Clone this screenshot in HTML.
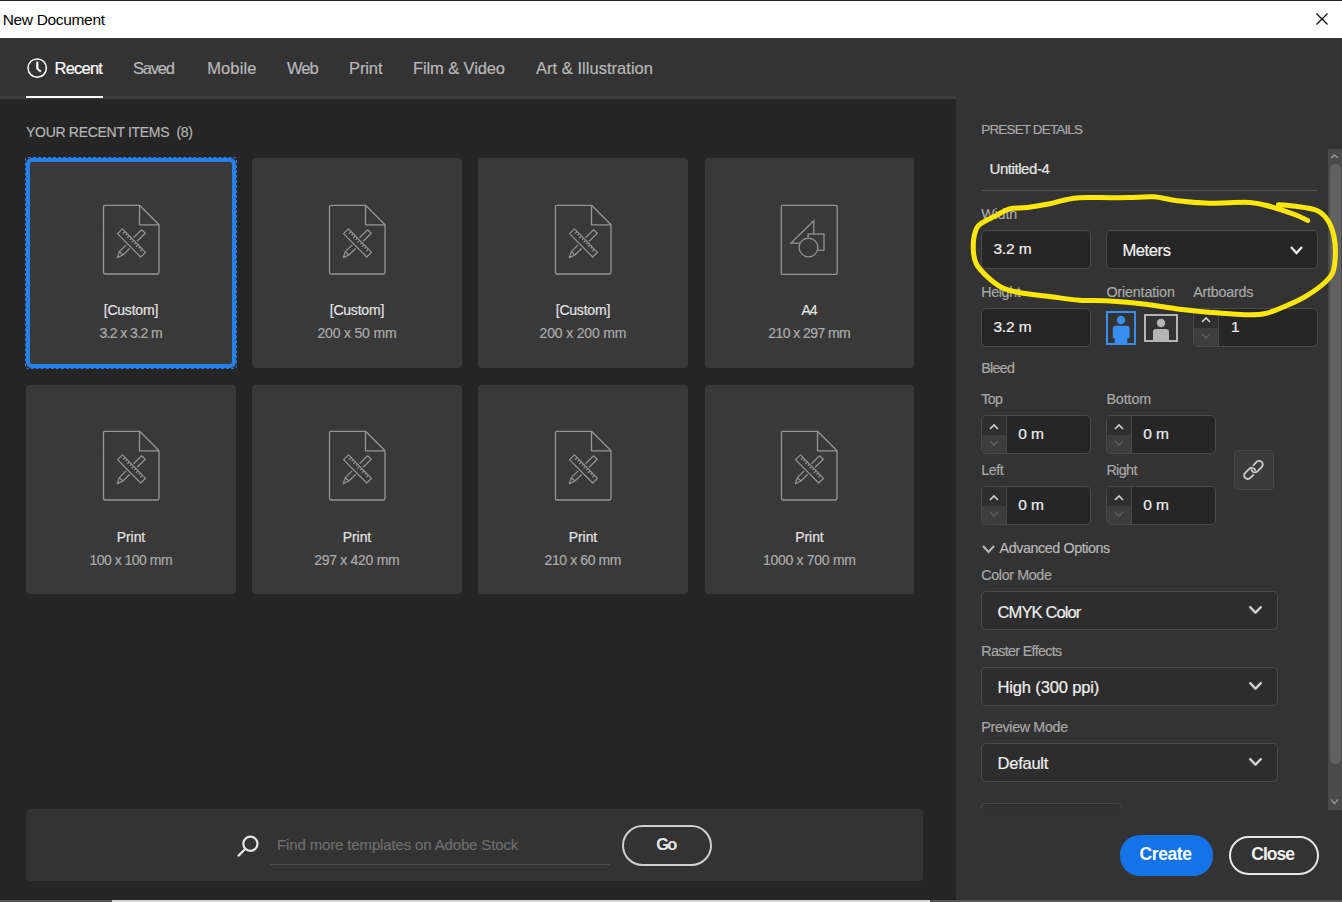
<!DOCTYPE html><html><head><meta charset="utf-8"><style>
html,body{margin:0;padding:0;}
body{width:1342px;height:902px;position:relative;overflow:hidden;background:#252525;font-family:"Liberation Sans",sans-serif;}
.t{position:absolute;line-height:1;white-space:nowrap;-webkit-text-stroke:0.2px currentColor;}
.r{position:absolute;box-sizing:border-box;}
svg{position:absolute;overflow:visible;}
</style></head><body>
<div class="r" style="left:0px;top:0px;width:1342px;height:1px;background:#1c1c1c;"></div>
<div class="r" style="left:0px;top:1px;width:1342px;height:37px;background:#ffffff;"></div>
<div class="t" style="left:2.70px;top:11.88px;font-size:15.5px;color:#000;letter-spacing:-0.331px;-webkit-text-stroke:0;">New Document</div>
<svg style="left:1316px;top:13px" width="12" height="12"><path d="M0.5 0.5L11.5 11.5M11.5 0.5L0.5 11.5" stroke="#000" stroke-width="1.1"/></svg>
<div class="r" style="left:0px;top:38px;width:1342px;height:58px;background:#333333;"></div>
<div class="r" style="left:0px;top:96px;width:1342px;height:3px;background:#3e3e3e;"></div>
<div class="r" style="left:26px;top:96px;width:77px;height:2px;background:#ffffff;"></div>
<svg style="left:27px;top:58px" width="20" height="20" viewBox="0 0 20 20"><circle cx="10.2" cy="10.1" r="9.2" fill="none" stroke="#fff" stroke-width="1.5"/><path d="M10.3 3.6V10.6L13.8 13.8" fill="none" stroke="#fff" stroke-width="2.2"/></svg>
<div class="t" style="left:54.60px;top:60.03px;font-size:16.5px;color:#ffffff;letter-spacing:-0.793px;">Recent</div>
<div class="t" style="left:133.00px;top:60.03px;font-size:16.5px;color:#b8b8b8;letter-spacing:-1.194px;">Saved</div>
<div class="t" style="left:207.20px;top:60.03px;font-size:16.5px;color:#b8b8b8;letter-spacing:0.121px;">Mobile</div>
<div class="t" style="left:287.00px;top:60.03px;font-size:16.5px;color:#b8b8b8;letter-spacing:-0.959px;">Web</div>
<div class="t" style="left:349.00px;top:60.03px;font-size:16.5px;color:#b8b8b8;letter-spacing:-0.102px;">Print</div>
<div class="t" style="left:413.00px;top:60.03px;font-size:16.5px;color:#b8b8b8;letter-spacing:-0.111px;">Film &amp; Video</div>
<div class="t" style="left:536.00px;top:60.03px;font-size:16.5px;color:#b8b8b8;letter-spacing:0.032px;">Art &amp; Illustration</div>
<div class="t" style="left:26.00px;top:125.15px;font-size:14px;color:#b4b4b4;letter-spacing:-0.296px;">YOUR RECENT ITEMS&nbsp;&nbsp;(8)</div>
<div class="r" style="left:26px;top:158px;width:210px;height:210px;background:#393939;border-radius:4px;"></div>
<svg style="left:101.5px;top:203.5px" width="58" height="72" viewBox="0 0 58 72"><path d="M1.5 3Q1.5 1.3 3.2 1.3H37.5L57 20.8V68.3Q57 70 55.3 70H3.2Q1.5 70 1.5 68.3Z" fill="none" stroke="#959595" stroke-width="1.3" stroke-linejoin="round"/><path d="M37.5 1.3V20.8H57" fill="none" stroke="#959595" stroke-width="1.3" stroke-linejoin="round"/><g fill="none" stroke="#959595" stroke-width="1.2" stroke-linejoin="round">
<path d="M39.6 25.8L43.3 29.2L20.9 51L15.3 53.6L17.3 47.6Z M17.3 47.6L20.9 51"/>
<path d="M15.5 29.6L20.5 24.9L43.5 48.3L38.7 53Z" fill="#393939" stroke="#393939" stroke-width="3.6"/>
<path d="M15.5 29.6L20.5 24.9L43.5 48.3L38.7 53Z" fill="#393939"/>
<path d="M23.02 27.47l-2.14 2.10M25.20 29.68l-1.64 1.61M27.37 31.89l-2.14 2.10M29.54 34.10l-1.64 1.61M31.72 36.31l-2.14 2.10M33.89 38.52l-1.64 1.61M36.06 40.73l-2.14 2.10M38.23 42.94l-1.64 1.61M40.41 45.15l-2.14 2.10"/>
</g></svg>
<div class="t" style="left:103.70px;top:303.15px;font-size:14px;color:#e2e2e2;letter-spacing:-0.200px;">[Custom]</div>
<div class="t" style="left:99.40px;top:325.65px;font-size:14px;color:#aaaaaa;letter-spacing:-0.606px;">3.2 x 3.2 m</div>
<div class="r" style="left:252px;top:158px;width:210px;height:210px;background:#393939;border-radius:4px;"></div>
<svg style="left:327.5px;top:203.5px" width="58" height="72" viewBox="0 0 58 72"><path d="M1.5 3Q1.5 1.3 3.2 1.3H37.5L57 20.8V68.3Q57 70 55.3 70H3.2Q1.5 70 1.5 68.3Z" fill="none" stroke="#959595" stroke-width="1.3" stroke-linejoin="round"/><path d="M37.5 1.3V20.8H57" fill="none" stroke="#959595" stroke-width="1.3" stroke-linejoin="round"/><g fill="none" stroke="#959595" stroke-width="1.2" stroke-linejoin="round">
<path d="M39.6 25.8L43.3 29.2L20.9 51L15.3 53.6L17.3 47.6Z M17.3 47.6L20.9 51"/>
<path d="M15.5 29.6L20.5 24.9L43.5 48.3L38.7 53Z" fill="#393939" stroke="#393939" stroke-width="3.6"/>
<path d="M15.5 29.6L20.5 24.9L43.5 48.3L38.7 53Z" fill="#393939"/>
<path d="M23.02 27.47l-2.14 2.10M25.20 29.68l-1.64 1.61M27.37 31.89l-2.14 2.10M29.54 34.10l-1.64 1.61M31.72 36.31l-2.14 2.10M33.89 38.52l-1.64 1.61M36.06 40.73l-2.14 2.10M38.23 42.94l-1.64 1.61M40.41 45.15l-2.14 2.10"/>
</g></svg>
<div class="t" style="left:329.70px;top:303.15px;font-size:14px;color:#e2e2e2;letter-spacing:-0.200px;">[Custom]</div>
<div class="t" style="left:317.45px;top:325.65px;font-size:14px;color:#aaaaaa;letter-spacing:-0.182px;">200 x 50 mm</div>
<div class="r" style="left:478px;top:158px;width:210px;height:210px;background:#393939;border-radius:4px;"></div>
<svg style="left:553.5px;top:203.5px" width="58" height="72" viewBox="0 0 58 72"><path d="M1.5 3Q1.5 1.3 3.2 1.3H37.5L57 20.8V68.3Q57 70 55.3 70H3.2Q1.5 70 1.5 68.3Z" fill="none" stroke="#959595" stroke-width="1.3" stroke-linejoin="round"/><path d="M37.5 1.3V20.8H57" fill="none" stroke="#959595" stroke-width="1.3" stroke-linejoin="round"/><g fill="none" stroke="#959595" stroke-width="1.2" stroke-linejoin="round">
<path d="M39.6 25.8L43.3 29.2L20.9 51L15.3 53.6L17.3 47.6Z M17.3 47.6L20.9 51"/>
<path d="M15.5 29.6L20.5 24.9L43.5 48.3L38.7 53Z" fill="#393939" stroke="#393939" stroke-width="3.6"/>
<path d="M15.5 29.6L20.5 24.9L43.5 48.3L38.7 53Z" fill="#393939"/>
<path d="M23.02 27.47l-2.14 2.10M25.20 29.68l-1.64 1.61M27.37 31.89l-2.14 2.10M29.54 34.10l-1.64 1.61M31.72 36.31l-2.14 2.10M33.89 38.52l-1.64 1.61M36.06 40.73l-2.14 2.10M38.23 42.94l-1.64 1.61M40.41 45.15l-2.14 2.10"/>
</g></svg>
<div class="t" style="left:555.70px;top:303.15px;font-size:14px;color:#e2e2e2;letter-spacing:-0.200px;">[Custom]</div>
<div class="t" style="left:539.55px;top:325.65px;font-size:14px;color:#aaaaaa;letter-spacing:-0.166px;">200 x 200 mm</div>
<div class="r" style="left:705px;top:158px;width:209px;height:210px;background:#393939;border-radius:4px;"></div>
<svg style="left:780.0px;top:203.5px" width="58" height="72" viewBox="0 0 58 72"><rect x="1.3" y="1.3" width="55.9" height="69.1" rx="1.5" fill="none" stroke="#959595" stroke-width="1.3"/>
<g stroke="#959595" stroke-width="1.25">
<path d="M10.9 39H33.8V16.8Z" fill="none" stroke-linejoin="miter"/>
<rect x="28.1" y="30" width="15.9" height="16.3" fill="#393939"/>
<circle cx="28.5" cy="43.5" r="9.4" fill="#393939"/>
</g></svg>
<div class="t" style="left:801.45px;top:303.15px;font-size:14px;color:#e2e2e2;letter-spacing:-1.015px;">A4</div>
<div class="t" style="left:768.20px;top:325.65px;font-size:14px;color:#aaaaaa;letter-spacing:-0.557px;">210 x 297 mm</div>
<div class="r" style="left:26px;top:385px;width:210px;height:209px;background:#393939;border-radius:4px;"></div>
<svg style="left:101.5px;top:429.5px" width="58" height="72" viewBox="0 0 58 72"><path d="M1.5 3Q1.5 1.3 3.2 1.3H37.5L57 20.8V68.3Q57 70 55.3 70H3.2Q1.5 70 1.5 68.3Z" fill="none" stroke="#959595" stroke-width="1.3" stroke-linejoin="round"/><path d="M37.5 1.3V20.8H57" fill="none" stroke="#959595" stroke-width="1.3" stroke-linejoin="round"/><g fill="none" stroke="#959595" stroke-width="1.2" stroke-linejoin="round">
<path d="M39.6 25.8L43.3 29.2L20.9 51L15.3 53.6L17.3 47.6Z M17.3 47.6L20.9 51"/>
<path d="M15.5 29.6L20.5 24.9L43.5 48.3L38.7 53Z" fill="#393939" stroke="#393939" stroke-width="3.6"/>
<path d="M15.5 29.6L20.5 24.9L43.5 48.3L38.7 53Z" fill="#393939"/>
<path d="M23.02 27.47l-2.14 2.10M25.20 29.68l-1.64 1.61M27.37 31.89l-2.14 2.10M29.54 34.10l-1.64 1.61M31.72 36.31l-2.14 2.10M33.89 38.52l-1.64 1.61M36.06 40.73l-2.14 2.10M38.23 42.94l-1.64 1.61M40.41 45.15l-2.14 2.10"/>
</g></svg>
<div class="t" style="left:116.80px;top:530.15px;font-size:14px;color:#e2e2e2;letter-spacing:-0.093px;">Print</div>
<div class="t" style="left:89.40px;top:552.65px;font-size:14px;color:#aaaaaa;letter-spacing:-0.502px;">100 x 100 mm</div>
<div class="r" style="left:252px;top:385px;width:210px;height:209px;background:#393939;border-radius:4px;"></div>
<svg style="left:327.5px;top:429.5px" width="58" height="72" viewBox="0 0 58 72"><path d="M1.5 3Q1.5 1.3 3.2 1.3H37.5L57 20.8V68.3Q57 70 55.3 70H3.2Q1.5 70 1.5 68.3Z" fill="none" stroke="#959595" stroke-width="1.3" stroke-linejoin="round"/><path d="M37.5 1.3V20.8H57" fill="none" stroke="#959595" stroke-width="1.3" stroke-linejoin="round"/><g fill="none" stroke="#959595" stroke-width="1.2" stroke-linejoin="round">
<path d="M39.6 25.8L43.3 29.2L20.9 51L15.3 53.6L17.3 47.6Z M17.3 47.6L20.9 51"/>
<path d="M15.5 29.6L20.5 24.9L43.5 48.3L38.7 53Z" fill="#393939" stroke="#393939" stroke-width="3.6"/>
<path d="M15.5 29.6L20.5 24.9L43.5 48.3L38.7 53Z" fill="#393939"/>
<path d="M23.02 27.47l-2.14 2.10M25.20 29.68l-1.64 1.61M27.37 31.89l-2.14 2.10M29.54 34.10l-1.64 1.61M31.72 36.31l-2.14 2.10M33.89 38.52l-1.64 1.61M36.06 40.73l-2.14 2.10M38.23 42.94l-1.64 1.61M40.41 45.15l-2.14 2.10"/>
</g></svg>
<div class="t" style="left:342.80px;top:530.15px;font-size:14px;color:#e2e2e2;letter-spacing:-0.093px;">Print</div>
<div class="t" style="left:314.30px;top:552.65px;font-size:14px;color:#aaaaaa;letter-spacing:-0.302px;">297 x 420 mm</div>
<div class="r" style="left:478px;top:385px;width:210px;height:209px;background:#393939;border-radius:4px;"></div>
<svg style="left:553.5px;top:429.5px" width="58" height="72" viewBox="0 0 58 72"><path d="M1.5 3Q1.5 1.3 3.2 1.3H37.5L57 20.8V68.3Q57 70 55.3 70H3.2Q1.5 70 1.5 68.3Z" fill="none" stroke="#959595" stroke-width="1.3" stroke-linejoin="round"/><path d="M37.5 1.3V20.8H57" fill="none" stroke="#959595" stroke-width="1.3" stroke-linejoin="round"/><g fill="none" stroke="#959595" stroke-width="1.2" stroke-linejoin="round">
<path d="M39.6 25.8L43.3 29.2L20.9 51L15.3 53.6L17.3 47.6Z M17.3 47.6L20.9 51"/>
<path d="M15.5 29.6L20.5 24.9L43.5 48.3L38.7 53Z" fill="#393939" stroke="#393939" stroke-width="3.6"/>
<path d="M15.5 29.6L20.5 24.9L43.5 48.3L38.7 53Z" fill="#393939"/>
<path d="M23.02 27.47l-2.14 2.10M25.20 29.68l-1.64 1.61M27.37 31.89l-2.14 2.10M29.54 34.10l-1.64 1.61M31.72 36.31l-2.14 2.10M33.89 38.52l-1.64 1.61M36.06 40.73l-2.14 2.10M38.23 42.94l-1.64 1.61M40.41 45.15l-2.14 2.10"/>
</g></svg>
<div class="t" style="left:568.80px;top:530.15px;font-size:14px;color:#e2e2e2;letter-spacing:-0.093px;">Print</div>
<div class="t" style="left:544.55px;top:552.65px;font-size:14px;color:#aaaaaa;letter-spacing:-0.402px;">210 x 60 mm</div>
<div class="r" style="left:705px;top:385px;width:209px;height:209px;background:#393939;border-radius:4px;"></div>
<svg style="left:780.0px;top:429.5px" width="58" height="72" viewBox="0 0 58 72"><path d="M1.5 3Q1.5 1.3 3.2 1.3H37.5L57 20.8V68.3Q57 70 55.3 70H3.2Q1.5 70 1.5 68.3Z" fill="none" stroke="#959595" stroke-width="1.3" stroke-linejoin="round"/><path d="M37.5 1.3V20.8H57" fill="none" stroke="#959595" stroke-width="1.3" stroke-linejoin="round"/><g fill="none" stroke="#959595" stroke-width="1.2" stroke-linejoin="round">
<path d="M39.6 25.8L43.3 29.2L20.9 51L15.3 53.6L17.3 47.6Z M17.3 47.6L20.9 51"/>
<path d="M15.5 29.6L20.5 24.9L43.5 48.3L38.7 53Z" fill="#393939" stroke="#393939" stroke-width="3.6"/>
<path d="M15.5 29.6L20.5 24.9L43.5 48.3L38.7 53Z" fill="#393939"/>
<path d="M23.02 27.47l-2.14 2.10M25.20 29.68l-1.64 1.61M27.37 31.89l-2.14 2.10M29.54 34.10l-1.64 1.61M31.72 36.31l-2.14 2.10M33.89 38.52l-1.64 1.61M36.06 40.73l-2.14 2.10M38.23 42.94l-1.64 1.61M40.41 45.15l-2.14 2.10"/>
</g></svg>
<div class="t" style="left:795.30px;top:530.15px;font-size:14px;color:#e2e2e2;letter-spacing:-0.093px;">Print</div>
<div class="t" style="left:763.05px;top:552.65px;font-size:14px;color:#aaaaaa;letter-spacing:-0.300px;">1000 x 700 mm</div>
<div class="r" style="left:25px;top:157px;width:212px;height:212px;background:transparent;border:1px dashed #2d7be0;border-radius:3px;"></div>
<div class="r" style="left:26px;top:158px;width:210px;height:210px;background:transparent;border:4px solid #2680eb;border-radius:6px;"></div>
<div class="r" style="left:26px;top:809px;width:897px;height:72px;background:#333333;border-radius:4px;"></div>
<svg style="left:236px;top:835px" width="24" height="24" viewBox="0 0 24 24"><circle cx="14.4" cy="8.8" r="7.1" fill="none" stroke="#e4e4e4" stroke-width="2.2"/><path d="M9.2 14L2.6 20.6" stroke="#e4e4e4" stroke-width="2.3" stroke-linecap="round"/></svg>
<div class="t" style="left:277.10px;top:836.60px;font-size:15px;color:#6e6e6e;letter-spacing:-0.145px;">Find more templates on Adobe Stock</div>
<div class="r" style="left:270px;top:864px;width:340px;height:1px;background:#4a4a4a;"></div>
<div class="r" style="left:622px;top:825px;width:90px;height:41px;background:transparent;border:2px solid #cfcfcf;border-radius:21px;"></div>
<div class="t" style="left:656.30px;top:836.03px;font-size:16.5px;color:#e8e8e8;letter-spacing:-1.994px;font-weight:700;-webkit-text-stroke:0;">Go</div>
<div class="r" style="left:0px;top:900px;width:112px;height:2px;background:#555555;"></div>
<div class="r" style="left:112px;top:900px;width:818px;height:2px;background:#d4d4d4;"></div>
<div class="r" style="left:930px;top:900px;width:412px;height:2px;background:#555555;"></div>
<div class="r" style="left:956px;top:38px;width:386px;height:862px;background:#333333;"></div>
<div style="position:absolute;left:956px;top:99px;width:386px;height:710px;overflow:hidden">
<div style="position:absolute;left:-956px;top:-99px;width:1342px;height:902px">
<div class="t" style="left:981.30px;top:122.57px;font-size:13.5px;color:#a8a8a8;letter-spacing:-0.853px;">PRESET DETAILS</div>
<div class="t" style="left:989.50px;top:161.30px;font-size:15px;color:#e8e8e8;letter-spacing:-0.433px;">Untitled-4</div>
<div class="r" style="left:982px;top:189.5px;width:335px;height:1.2px;background:#555555;"></div>
<div class="t" style="left:981.20px;top:206.89px;font-size:14.3px;color:#a8a8a8;letter-spacing:-0.118px;">Width</div>
<div class="r" style="left:981px;top:230px;width:110px;height:39px;background:#262626;border:1px solid #4a4a4a;border-radius:5px;"></div>
<div class="t" style="left:993.40px;top:240.88px;font-size:15.5px;color:#f0f0f0;letter-spacing:-0.138px;">3.2 m</div>
<div class="r" style="left:1106px;top:230px;width:212px;height:39px;background:#262626;border:1px solid #4a4a4a;border-radius:5px;"></div>
<div class="t" style="left:1122.50px;top:242.03px;font-size:16.5px;color:#f4f4f4;letter-spacing:-0.401px;">Meters</div>
<svg style="left:1289.5px;top:245.5px" width="13" height="8" viewBox="0 0 13 8"><path d="M1 1L6.5 7L12 1" fill="none" stroke="#f0f0f0" stroke-width="2.2"/></svg>
<div class="t" style="left:981.20px;top:285.09px;font-size:14.3px;color:#a8a8a8;letter-spacing:-0.345px;">Height</div>
<div class="t" style="left:1106.40px;top:285.09px;font-size:14.3px;color:#a8a8a8;letter-spacing:-0.146px;">Orientation</div>
<div class="t" style="left:1193.20px;top:285.09px;font-size:14.3px;color:#a8a8a8;letter-spacing:-0.236px;">Artboards</div>
<div class="r" style="left:981px;top:308px;width:110px;height:39px;background:#262626;border:1px solid #4a4a4a;border-radius:5px;"></div>
<div class="t" style="left:993.40px;top:319.08px;font-size:15.5px;color:#f0f0f0;letter-spacing:-0.138px;">3.2 m</div>
<svg style="left:1106px;top:311px" width="30" height="34" viewBox="0 0 30 34"><rect x="1" y="1" width="28" height="32" fill="none" stroke="#378ef0" stroke-width="2"/><circle cx="15" cy="9" r="4.2" fill="#378ef0"/><path d="M8.7 33V27.3H6.8V18Q6.8 14.7 10 14.7H20.4Q23.6 14.7 23.6 18V27.3H21.3V33Z" fill="#378ef0"/></svg>
<svg style="left:1144px;top:314px" width="34" height="28" viewBox="0 0 34 28"><rect x="1" y="1" width="32" height="26" fill="none" stroke="#b4b4b4" stroke-width="2"/><circle cx="17" cy="9" r="4.2" fill="#b4b4b4"/><path d="M9 27V18Q9 15 12 15H22Q25 15 25 18V27Z" fill="#b4b4b4"/></svg>
<div class="r" style="left:1193px;top:308px;width:125px;height:39px;background:#262626;border:1px solid #4a4a4a;border-radius:5px;"></div>
<div class="r" style="left:1194px;top:309px;width:25px;height:19px;background:#2e2e2e;border-top-left-radius:4px;"></div>
<div class="r" style="left:1194px;top:328px;width:25px;height:18px;background:#3d3d3d;border-bottom-left-radius:4px;"></div>
<div class="r" style="left:1218px;top:309px;width:1px;height:37px;background:#484848;"></div>
<svg style="left:1201px;top:317px" width="10" height="6" viewBox="0 0 10 6"><path d="M1 5L5.0 1L9 5" fill="none" stroke="#d0d0d0" stroke-width="1.6"/></svg>
<svg style="left:1201px;top:333px" width="10" height="6" viewBox="0 0 10 6"><path d="M1 1L5 5L9 1" fill="none" stroke="#5c5c5c" stroke-width="1.6"/></svg>
<div class="t" style="left:1231.00px;top:319.08px;font-size:15.5px;color:#f0f0f0;letter-spacing:-2.503px;">1</div>
<div class="t" style="left:981.30px;top:361.09px;font-size:14.3px;color:#a8a8a8;letter-spacing:-0.743px;">Bleed</div>
<div class="t" style="left:981.30px;top:392.09px;font-size:14.3px;color:#a8a8a8;letter-spacing:-0.679px;">Top</div>
<div class="t" style="left:1106.40px;top:392.09px;font-size:14.3px;color:#a8a8a8;letter-spacing:-0.099px;">Bottom</div>
<div class="r" style="left:981px;top:415px;width:110px;height:39px;background:#262626;border:1px solid #4a4a4a;border-radius:5px;"></div>
<div class="r" style="left:982px;top:416px;width:25px;height:19px;background:#2e2e2e;border-top-left-radius:4px;"></div>
<div class="r" style="left:982px;top:435px;width:25px;height:18px;background:#3d3d3d;border-bottom-left-radius:4px;"></div>
<div class="r" style="left:1006px;top:416px;width:1px;height:37px;background:#484848;"></div>
<svg style="left:989px;top:424px" width="10" height="6" viewBox="0 0 10 6"><path d="M1 5L5.0 1L9 5" fill="none" stroke="#d0d0d0" stroke-width="1.6"/></svg>
<svg style="left:989px;top:440px" width="10" height="6" viewBox="0 0 10 6"><path d="M1 1L5 5L9 1" fill="none" stroke="#5c5c5c" stroke-width="1.6"/></svg>
<div class="t" style="left:1018.20px;top:426.08px;font-size:15.5px;color:#f0f0f0;letter-spacing:-0.073px;">0 m</div>
<div class="r" style="left:1106px;top:415px;width:110px;height:39px;background:#262626;border:1px solid #4a4a4a;border-radius:5px;"></div>
<div class="r" style="left:1107px;top:416px;width:25px;height:19px;background:#2e2e2e;border-top-left-radius:4px;"></div>
<div class="r" style="left:1107px;top:435px;width:25px;height:18px;background:#3d3d3d;border-bottom-left-radius:4px;"></div>
<div class="r" style="left:1131px;top:416px;width:1px;height:37px;background:#484848;"></div>
<svg style="left:1114px;top:424px" width="10" height="6" viewBox="0 0 10 6"><path d="M1 5L5.0 1L9 5" fill="none" stroke="#d0d0d0" stroke-width="1.6"/></svg>
<svg style="left:1114px;top:440px" width="10" height="6" viewBox="0 0 10 6"><path d="M1 1L5 5L9 1" fill="none" stroke="#5c5c5c" stroke-width="1.6"/></svg>
<div class="t" style="left:1143.20px;top:426.08px;font-size:15.5px;color:#f0f0f0;letter-spacing:-0.073px;">0 m</div>
<div class="t" style="left:981.30px;top:463.19px;font-size:14.3px;color:#a8a8a8;letter-spacing:-0.515px;">Left</div>
<div class="t" style="left:1106.40px;top:463.19px;font-size:14.3px;color:#a8a8a8;letter-spacing:-0.598px;">Right</div>
<div class="r" style="left:981px;top:486px;width:110px;height:39px;background:#262626;border:1px solid #4a4a4a;border-radius:5px;"></div>
<div class="r" style="left:982px;top:487px;width:25px;height:19px;background:#2e2e2e;border-top-left-radius:4px;"></div>
<div class="r" style="left:982px;top:506px;width:25px;height:18px;background:#3d3d3d;border-bottom-left-radius:4px;"></div>
<div class="r" style="left:1006px;top:487px;width:1px;height:37px;background:#484848;"></div>
<svg style="left:989px;top:495px" width="10" height="6" viewBox="0 0 10 6"><path d="M1 5L5.0 1L9 5" fill="none" stroke="#d0d0d0" stroke-width="1.6"/></svg>
<svg style="left:989px;top:511px" width="10" height="6" viewBox="0 0 10 6"><path d="M1 1L5 5L9 1" fill="none" stroke="#5c5c5c" stroke-width="1.6"/></svg>
<div class="t" style="left:1018.20px;top:497.18px;font-size:15.5px;color:#f0f0f0;letter-spacing:-0.073px;">0 m</div>
<div class="r" style="left:1106px;top:486px;width:110px;height:39px;background:#262626;border:1px solid #4a4a4a;border-radius:5px;"></div>
<div class="r" style="left:1107px;top:487px;width:25px;height:19px;background:#2e2e2e;border-top-left-radius:4px;"></div>
<div class="r" style="left:1107px;top:506px;width:25px;height:18px;background:#3d3d3d;border-bottom-left-radius:4px;"></div>
<div class="r" style="left:1131px;top:487px;width:1px;height:37px;background:#484848;"></div>
<svg style="left:1114px;top:495px" width="10" height="6" viewBox="0 0 10 6"><path d="M1 5L5.0 1L9 5" fill="none" stroke="#d0d0d0" stroke-width="1.6"/></svg>
<svg style="left:1114px;top:511px" width="10" height="6" viewBox="0 0 10 6"><path d="M1 1L5 5L9 1" fill="none" stroke="#5c5c5c" stroke-width="1.6"/></svg>
<div class="t" style="left:1143.20px;top:497.18px;font-size:15.5px;color:#f0f0f0;letter-spacing:-0.073px;">0 m</div>
<div class="r" style="left:1233.5px;top:450px;width:40px;height:40px;background:#3b3b3b;border:1px solid #474747;border-radius:4px;"></div>
<svg style="left:1243px;top:459px" width="22" height="22" viewBox="0 0 22 22"><g fill="none" stroke="#c8c8c8" stroke-width="1.9" stroke-linecap="round"><path d="M10.49 6.12L13.55 2.95A3.6 3.6 0 0 1 18.65 8.05L14.45 12.35A3.6 3.6 0 0 1 8.52 11.03"/><path d="M10.21 16.08L7.35 18.95A3.6 3.6 0 0 1 2.25 13.85L6.25 9.85A3.6 3.6 0 0 1 12.18 11.17"/></g></svg>
<svg style="left:982px;top:544.5px" width="13" height="8" viewBox="0 0 13 8"><path d="M1 1L6.5 7L12 1" fill="none" stroke="#b8b8b8" stroke-width="2"/></svg>
<div class="t" style="left:999.60px;top:540.69px;font-size:14.3px;color:#b8b8b8;letter-spacing:-0.411px;">Advanced Options</div>
<div class="t" style="left:981.30px;top:568.29px;font-size:14.3px;color:#a8a8a8;letter-spacing:-0.370px;">Color Mode</div>
<div class="r" style="left:981px;top:591px;width:297px;height:39px;background:#2d2d2d;border:1px solid #4a4a4a;border-radius:5px;"></div>
<div class="t" style="left:997.60px;top:603.83px;font-size:16.5px;color:#f0f0f0;letter-spacing:-0.889px;">CMYK Color</div>
<svg style="left:1249.1px;top:606.3px" width="13" height="8" viewBox="0 0 13 8"><path d="M1.2 1.2L6.5 6.6L11.8 1.2" fill="none" stroke="#d0d0d0" stroke-width="2.4" stroke-linecap="round" stroke-linejoin="round"/></svg>
<div class="t" style="left:981.30px;top:644.09px;font-size:14.3px;color:#a8a8a8;letter-spacing:-0.666px;">Raster Effects</div>
<div class="r" style="left:981px;top:667px;width:297px;height:39px;background:#2d2d2d;border:1px solid #4a4a4a;border-radius:5px;"></div>
<div class="t" style="left:997.60px;top:679.23px;font-size:16.5px;color:#f0f0f0;letter-spacing:-0.159px;">High (300 ppi)</div>
<svg style="left:1249.1px;top:682.3px" width="13" height="8" viewBox="0 0 13 8"><path d="M1.2 1.2L6.5 6.6L11.8 1.2" fill="none" stroke="#d0d0d0" stroke-width="2.4" stroke-linecap="round" stroke-linejoin="round"/></svg>
<div class="t" style="left:981.30px;top:720.09px;font-size:14.3px;color:#a8a8a8;letter-spacing:-0.345px;">Preview Mode</div>
<div class="r" style="left:981px;top:743px;width:297px;height:39px;background:#2d2d2d;border:1px solid #4a4a4a;border-radius:5px;"></div>
<div class="t" style="left:997.60px;top:755.03px;font-size:16.5px;color:#f0f0f0;letter-spacing:-0.261px;">Default</div>
<svg style="left:1249.1px;top:758.3px" width="13" height="8" viewBox="0 0 13 8"><path d="M1.2 1.2L6.5 6.6L11.8 1.2" fill="none" stroke="#d0d0d0" stroke-width="2.4" stroke-linecap="round" stroke-linejoin="round"/></svg>
<div class="r" style="left:981px;top:803px;width:141px;height:20px;background:#303030;border:1px solid #484848;border-radius:4px;"></div>
</div></div>
<div class="r" style="left:1328px;top:149px;width:14px;height:661px;background:#4a4a4a;"></div>
<div class="r" style="left:1329.5px;top:164px;width:11.5px;height:600px;background:#616161;border-radius:6px;"></div>
<svg style="left:1330px;top:153.5px" width="9" height="5" viewBox="0 0 9 5"><path d="M1 4L4.5 1L8 4" fill="none" stroke="#9a9a9a" stroke-width="1.2"/></svg>
<svg style="left:1330px;top:799px" width="9" height="5" viewBox="0 0 9 5"><path d="M1 0.5L4.5 4.5L8 0.5" fill="none" stroke="#9a9a9a" stroke-width="1.2"/></svg>
<div class="r" style="left:1120px;top:835px;width:93px;height:40.5px;background:#1473e6;border-radius:20px;"></div>
<div class="t" style="left:1139.50px;top:846.18px;font-size:17.5px;color:#ffffff;letter-spacing:-0.394px;font-weight:700;-webkit-text-stroke:0;">Create</div>
<div class="r" style="left:1229px;top:835.5px;width:89.5px;height:39.5px;background:transparent;border:2px solid #e6e6e6;border-radius:20px;"></div>
<div class="t" style="left:1251.30px;top:846.18px;font-size:17.5px;color:#f0f0f0;letter-spacing:-1.011px;font-weight:700;-webkit-text-stroke:0;">Close</div>
<svg style="left:0;top:0" width="1342" height="902" viewBox="0 0 1342 902"><path d="M1307.7 220.5C1305.7 219.6 1301.8 217.2 1295.9 215C1290.0 212.8 1279.9 209.2 1272.2 207.1C1264.5 205.0 1260.5 203.1 1250 202.4C1239.5 201.8 1221.1 203.5 1209 203.2C1196.9 202.9 1186.6 201.9 1177.4 200.8C1168.2 199.7 1161.6 197.3 1153.7 196.8C1145.8 196.3 1137.3 197.4 1130 197.6C1122.7 197.8 1118.0 197.7 1109.6 197.7C1101.2 197.7 1087.2 197.3 1079.7 197.7C1072.2 198.1 1069.7 199.0 1064.7 200C1059.7 201.0 1056.0 202.5 1049.8 203.7C1043.6 204.9 1034.0 206.5 1027.3 207.4C1020.6 208.3 1014.4 207.7 1009.4 208.9C1004.4 210.2 1002.4 212.3 997.4 214.9C992.4 217.5 983.4 221.2 979.5 224.7C975.6 228.2 975.2 231.3 974.2 235.9C973.2 240.5 973.1 247.6 973.5 252.3C973.9 257.0 974.3 260.3 976.5 264.3C978.7 268.3 982.7 272.4 986.9 276.3C991.1 280.2 996.4 284.8 1001.9 287.5C1007.4 290.2 1011.9 291.2 1019.9 292.7C1027.9 294.2 1039.8 295.2 1049.8 296.5C1059.8 297.8 1069.7 299.4 1079.7 300.2C1089.7 300.9 1098.6 300.3 1109.6 301C1120.6 301.7 1134.5 303.0 1145.8 304.3C1157.1 305.6 1166.9 307.7 1177.4 309C1187.9 310.3 1198.5 311.3 1209 312.2C1219.5 313.1 1231.4 314.2 1240.6 314.5C1249.8 314.8 1256.4 315.4 1264.3 313.8C1272.2 312.2 1280.9 308.0 1288 305C1295.1 302.0 1300.9 299.3 1306.9 295.6C1313.0 291.9 1320.0 286.9 1324.3 283C1328.6 279.1 1331.2 276.9 1333 271.9C1334.8 266.9 1335.3 258.9 1335.4 252.9C1335.5 246.9 1335.1 241.1 1333.8 235.6C1332.5 230.1 1330.4 224.0 1327.5 219.8C1324.6 215.6 1321.7 212.6 1316.4 210.3C1311.1 208.1 1302.2 207.2 1295.9 206.3C1289.6 205.4 1281.4 205.0 1278.5 204.7" fill="none" stroke="#ffe800" stroke-width="5" stroke-linecap="round" stroke-linejoin="round"/></svg>
</body></html>
